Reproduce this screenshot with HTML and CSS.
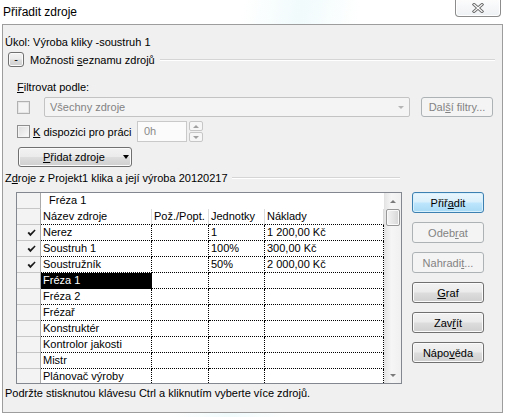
FILE: index.html
```html
<!DOCTYPE html>
<html lang="cs">
<head>
<meta charset="utf-8">
<title>Přiřadit zdroje</title>
<link rel="stylesheet" href="styles.css">
</head>
<body>
<div class="window">
  <div class="titlebar">
    <span class="title">Přiřadit zdroje</span>
    <div class="close">
      <svg width="12" height="10" viewBox="0 0 12 10">
        <path d="M2 1.5 L10 8.5 M10 1.5 L2 8.5" stroke="#6b6b6b" stroke-width="3" stroke-linecap="square"/>
        <path d="M2 1.5 L10 8.5 M10 1.5 L2 8.5" stroke="#ffffff" stroke-width="1.2" stroke-linecap="square"/>
      </svg>
    </div>
  </div>
  <div class="panel">
    <div class="task">Úkol: Výroba kliky -soustruh 1</div>
    <div class="sect">
      <span class="btn mini">-</span>
      <span class="sect-label">Možnosti <u>s</u>eznamu zdrojů</span>
      <span class="rule"></span>
    </div>
    <div class="filter-label"><u>F</u>iltrovat podle:</div>
    <div class="frow1">
      <span class="cb cb-dis"></span>
      <div class="combo">
        <span>Všechny zdroje</span>
        <span class="tri tri-gray"></span>
      </div>
      <span class="btn dis more">Dal<u>š</u>í filtry...</span>
    </div>
    <div class="frow2">
      <span class="cb"></span>
      <span class="avail"><u>K</u> dispozici pro práci</span>
      <div class="num">0h</div>
      <div class="spin">
        <span class="spin-btn"><span class="tri-up"></span></span>
        <span class="spin-btn"><span class="tri tri-small"></span></span>
      </div>
    </div>
    <span class="btn add"><span><u>P</u>řidat zdroje</span><span class="tri tri-black"></span></span>
    <div class="sect2">
      <span>Z<u>d</u>roje z Projekt1 klika a její výroba 20120217</span>
      <span class="rule"></span>
    </div>
    <div class="main">
      <div class="grid">
        <div class="sheet">
          <div class="rh"></div><div class="c edit">Fréza 1</div>

          <div class="rh"></div><div class="c h">Název zdroje</div><div class="c h">Pož./Popt.</div><div class="c h">Jednotky</div><div class="c h">Náklady</div>

          <div class="rh"><svg class="chk" width="9" height="8" viewBox="0 0 9 8"><path d="M0.5 4 L2 2.8 L3.4 4.6 L7.6 0.4 L8.6 1.4 L3.4 7.2 Z" fill="#1a1a1a"/></svg></div><div class="c">Nerez</div><div class="c"></div><div class="c">1</div><div class="c">1 200,00 Kč</div>

          <div class="rh"><svg class="chk" width="9" height="8" viewBox="0 0 9 8"><path d="M0.5 4 L2 2.8 L3.4 4.6 L7.6 0.4 L8.6 1.4 L3.4 7.2 Z" fill="#1a1a1a"/></svg></div><div class="c">Soustruh 1</div><div class="c"></div><div class="c">100%</div><div class="c">300,00 Kč</div>

          <div class="rh"><svg class="chk" width="9" height="8" viewBox="0 0 9 8"><path d="M0.5 4 L2 2.8 L3.4 4.6 L7.6 0.4 L8.6 1.4 L3.4 7.2 Z" fill="#1a1a1a"/></svg></div><div class="c">Soustružník</div><div class="c"></div><div class="c">50%</div><div class="c">2 000,00 Kč</div>

          <div class="rh"></div><div class="c sel">Fréza 1</div><div class="c"></div><div class="c"></div><div class="c"></div>

          <div class="rh"></div><div class="c">Fréza 2</div><div class="c"></div><div class="c"></div><div class="c"></div>

          <div class="rh"></div><div class="c">Frézař</div><div class="c"></div><div class="c"></div><div class="c"></div>

          <div class="rh"></div><div class="c">Konstruktér</div><div class="c"></div><div class="c"></div><div class="c"></div>

          <div class="rh"></div><div class="c">Kontrolor jakosti</div><div class="c"></div><div class="c"></div><div class="c"></div>

          <div class="rh"></div><div class="c">Mistr</div><div class="c"></div><div class="c"></div><div class="c"></div>

          <div class="rh"></div><div class="c">Plánovač výroby</div><div class="c"></div><div class="c"></div><div class="c"></div>
        </div>
        <div class="vscroll">
          <div class="arrow"><span class="tri-up sb-tri"></span></div>
          <div class="thumb"></div>
          <div class="track"></div>
          <div class="arrow"><span class="tri tri-small sb-tri"></span></div>
        </div>
      </div>
      <div class="buttons">
        <span class="btn def">Přiř<u>a</u>dit</span>
        <span class="btn dis">Odeb<u>r</u>at</span>
        <span class="btn dis">Nahradi<u>t</u>...</span>
        <span class="btn"><u>G</u>raf</span>
        <span class="btn">Zav<u>ř</u>ít</span>
        <span class="btn">Nápo<u>v</u>ěda</span>
      </div>
    </div>
    <div class="hint">Podržte stisknutou klávesu Ctrl a kliknutím vyberte více zdrojů.</div>
  </div>
</div>
</body>
</html>
```

FILE: styles.css
```css
* { box-sizing: border-box; }

html, body {
  margin: 0;
  padding: 0;
}

body {
  width: 509px;
  height: 417px;
  overflow: hidden;
  background: linear-gradient(100deg, #ffffff 0%, #ffffff 42%, #f1fbfc 52%, #ffffff 62%, #ffffff 100%);
  font-family: "Liberation Sans", Arial, sans-serif;
  font-size: 11px;
  color: #000;
}

u { text-decoration: underline; text-underline-offset: 1px; }

.window {
  width: 509px;
  height: 417px;
}

.titlebar {
  height: 24px;
  display: flex;
  align-items: flex-start;
}

.title {
  font-size: 12px;
  line-height: 15px;
  margin: 5px 0 0 3px;
  color: #000;
}

.close {
  margin-left: auto;
  margin-right: 8px;
  margin-top: -1px;
  width: 46px;
  height: 18px;
  border: 1px solid #8c8c8c;
  border-top: none;
  border-radius: 0 0 4px 4px;
  background: linear-gradient(#fdfdfd, #eef1f4);
  box-shadow: inset 0 0 0 1px #ffffff;
  display: flex;
  align-items: center;
  justify-content: center;
  padding-top: 1px;
}

.panel {
  margin-left: 2px;
  width: 501px;
  height: 389px;
  border: 1px solid #9d9d9d;
  background: #f0f0f0;
}

.task {
  margin: 10px 0 0 2px;
  line-height: 14px;
  height: 14px;
}

.sect {
  display: flex;
  align-items: center;
  height: 15px;
  margin: 3px 0 0 5px;
}

.sect-label {
  margin-left: 6px;
  line-height: 14px;
}

.rule {
  flex: 1;
  height: 2px;
  border-top: 1px solid #d5d5d5;
  border-bottom: 1px solid #ffffff;
  margin-left: 5px;
}

.sect .rule { margin-right: 7px; }

.btn {
  display: flex;
  align-items: center;
  justify-content: center;
  border: 1px solid #707070;
  border-radius: 3px;
  background: linear-gradient(#f2f2f2 0%, #ebebeb 48%, #dddddd 52%, #cfcfcf 100%);
  box-shadow: inset 0 0 0 1px #fbfbfb;
  color: #000;
  line-height: 14px;
  white-space: nowrap;
}

.btn.dis {
  border-color: #adb2b5;
  background: #f4f4f4;
  box-shadow: none;
  color: #838383;
}

.btn.def {
  border-color: #3c7fb1;
  background: linear-gradient(#eaf6fd 0%, #d9f0fc 48%, #bee6fd 52%, #a7d9f5 100%);
  box-shadow: inset 0 0 0 1px #d8f0fc;
}

.mini {
  width: 16px;
  height: 15px;
  padding-bottom: 2px;
}

.filter-label {
  margin: 13px 0 0 14px;
  line-height: 14px;
  height: 14px;
}

.cb {
  display: block;
  width: 13px;
  height: 13px;
  border: 1px solid #8f8f8f;
  background: linear-gradient(135deg, #dcdcdc, #fbfbfb);
  box-shadow: inset 0 0 0 1px #f4f4f4;
  flex: none;
}

.cb-dis {
  border-color: #b1b1b1;
  background: #f4f4f4;
  box-shadow: inset 0 0 0 1px #e6e6e6;
}

.frow1 {
  display: flex;
  align-items: center;
  height: 20px;
  margin: 3px 0 0 14px;
}

.combo {
  margin-left: 14px;
  width: 366px;
  height: 20px;
  border: 1px solid #c3c3c3;
  border-radius: 2px;
  background: #f4f4f4;
  color: #838383;
  display: flex;
  align-items: center;
  padding-left: 5px;
  padding-right: 5px;
}

.combo .tri { margin-left: auto; }

.tri {
  display: block;
  width: 0;
  height: 0;
  border-left: 4px solid transparent;
  border-right: 4px solid transparent;
  border-top: 4px solid #000;
}

.tri-gray { border-top-color: #b5b5b5; border-left-width: 3px; border-right-width: 3px; border-top-width: 3px; }

.tri-up {
  display: block;
  width: 0;
  height: 0;
  border-left: 3px solid transparent;
  border-right: 3px solid transparent;
  border-bottom: 3px solid #a0a0a0;
}

.tri-small {
  border-left-width: 3px;
  border-right-width: 3px;
  border-top-width: 3px;
  border-top-color: #a0a0a0;
}

.more {
  margin-left: 11px;
  width: 72px;
  height: 20px;
}

.frow2 {
  display: flex;
  align-items: center;
  height: 21px;
  margin: 4px 0 0 14px;
}

.avail {
  margin-left: 3px;
  width: 104px;
  line-height: 14px;
}

.num {
  width: 50px;
  height: 21px;
  border: 1px solid #c9c9c9;
  background: #fbfbfb;
  color: #8a8a8a;
  padding-left: 6px;
  line-height: 19px;
}

.spin {
  margin-left: 2px;
  width: 14px;
  height: 21px;
  display: flex;
  flex-direction: column;
  gap: 1px;
}

.spin-btn {
  flex: 1;
  border: 1px solid #c6c6c6;
  border-radius: 2px;
  background: #f6f6f6;
  display: flex;
  align-items: center;
  justify-content: center;
}

.add {
  margin: 5px 0 0 15px;
  width: 114px;
  height: 20px;
  justify-content: flex-start;
  padding-left: 24px;
}

.add .tri {
  margin-left: 18px;
  border-left-width: 3.5px;
  border-right-width: 3.5px;
}

.sect2 {
  display: flex;
  align-items: center;
  margin: 4px 102px 0 2px;
  height: 14px;
  line-height: 14px;
}

.sect2 .rule { margin-left: 4px; }

.main {
  display: flex;
  margin: 7px 0 0 13px;
}

.grid {
  width: 386px;
  height: 192px;
  border: 1px solid #828790;
  background: #fff;
  display: flex;
  overflow: hidden;
}

.sheet {
  display: grid;
  grid-template-columns: 24px 111px 57px 56px 119px;
  grid-template-rows: 16px 16px repeat(10, 16px);
  width: 367px;
  height: 190px;
  overflow: hidden;
  flex: none;
}

.rh {
  background: #f3f3f3;
  border-right: 1px solid #a9a9a9;
  border-bottom: 1px solid #c6c6c6;
  display: flex;
  align-items: center;
  padding-left: 10px;
}

.c {
  background: #fff;
  border-right: 1px dotted #000;
  border-bottom: 1px dotted #000;
  padding-left: 2px;
  line-height: 15px;
  white-space: nowrap;
  overflow: hidden;
}

.c.edit {
  grid-column: span 4;
  border: none;
  padding-left: 8px;
}

.c.h {
  border-right: 1px solid #dcdcdc;
}

.c.sel {
  background: #000;
  color: #fff;
}

.vscroll {
  width: 17px;
  flex: none;
  display: flex;
  flex-direction: column;
  background: linear-gradient(90deg, #e6e6e6, #f6f6f6 40%, #f0f0f0);
  border-left: 1px solid #e3e3e3;
}

.arrow {
  height: 16px;
  display: flex;
  align-items: center;
  justify-content: center;
}

.sb-tri { border-bottom-color: #7a7a7a; border-top-color: #7a7a7a; }

.thumb {
  height: 17px;
  margin: 0 1px;
  border: 1px solid #979797;
  border-radius: 2px;
  background: linear-gradient(90deg, #f3f3f3, #e6e6e6 50%, #d6d6d6);
  box-shadow: inset 0 0 0 1px #fafafa;
}

.track { flex: 1; }

.buttons {
  margin-left: 10px;
  width: 72px;
  display: flex;
  flex-direction: column;
  gap: 9px;
}

.buttons .btn {
  height: 21px;
}

.hint {
  margin: 2px 0 0 2px;
  line-height: 14px;
}
```
